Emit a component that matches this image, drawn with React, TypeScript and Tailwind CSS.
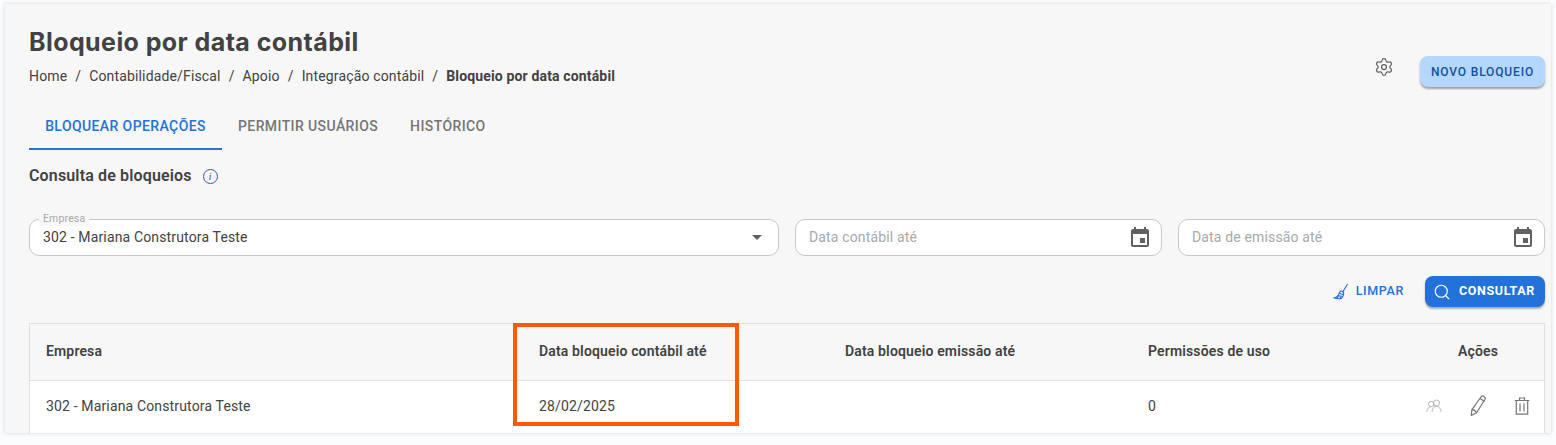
import React from "react";
import { Search, Settings } from "lucide-react";

const crumbs = ["Home", "Contabilidade/Fiscal", "Apoio", "Integração contábil"];

const CalendarIcon = () => (
  <svg width="24" height="24" viewBox="0 0 24 24" fill="#616161">
    <path d="M17 12h-5v5h5v-5zM16 1v2H8V1H6v2H5c-1.11 0-1.99.9-1.99 2L3 19c0 1.1.89 2 2 2h14c1.1 0 2-.9 2-2V5c0-1.1-.9-2-2-2h-1V1h-2zm3 18H5V8h14v11z" />
  </svg>
);

const BroomIcon = () => (
  <svg width="16" height="18" viewBox="0 0 16 18" fill="none" stroke="#1f6fd6" strokeWidth="1.1">
    <path d="M14.5 1 9.6 9.2" />
    <path d="M7.6 8.2c1-.6 2.6.2 3 1.4.3 1.3-.3 3.6-2 5.6-1.800.6-4.600.6-7.100-.3 1.600-.4 2.800-1.200 3.500-2.300.6-1.500 1.400-3.600 2.600-4.400z" />
    <path d="M4.500 12.500l5.400 1M6.200 10.200l4.400 1.600M4 15.200l1.800-2.600M7 15.600l1.200-2.300" />
  </svg>
);

const UsersIcon = () => (
  <svg width="16" height="14" viewBox="0 0 16 14" fill="none" stroke="#b5b5b5" strokeWidth="1">
    <circle cx="5.200" cy="5" r="2.700" />
    <circle cx="10.500" cy="4" r="3" />
    <path d="M.8 12.500c.3-2.600 1.700-4.300 3.500-4.500M6 12.800c.2-3.300 2-5.600 4.500-5.600s4.200 2.300 4.700 5.600" />
  </svg>
);

const PencilIcon = () => (
  <svg width="18" height="22" viewBox="0 0 18 22" fill="none" stroke="#757575" strokeWidth="1.200" strokeLinejoin="round">
    <path d="M12.300 1.500c.8-.8 2-.5 2.900.1.900.7 1.300 1.800.8 2.700L7.600 17.700 2.300 20.500l.6-5.900z" />
    <path d="M3 14.600c1.300-.1 3.500 1.200 4.600 3.100M11 3.600l4.700 3" />
  </svg>
);

const TrashIcon = () => (
  <svg width="16" height="18" viewBox="0 0 16 18" fill="none" stroke="#757575" strokeWidth="1.200">
    <path d="M.8 3.500h14.400M2.300 3.500v13.700h11.400V3.500M5.500 3.300V1h5v2.300M6 6.500v8M10 6.500v8" />
  </svg>
);

const Field = ({ label, width }: { label: string; width: string }) => (
  <div className={`flex h-[37px] items-center justify-between rounded-[10px] border border-[#c8c8c8] bg-white pl-[13px] pr-[9px] ${width}`}>
    <span className="text-[14px] text-[#a9a9a9]">{label}</span>
    <CalendarIcon />
  </div>
);

export default function App() {
  return (
    <div className="h-[445px] w-full overflow-hidden bg-[#fbfcfe] pl-[5px] pr-[5px] pt-[4px] font-['Roboto',sans-serif] tracking-[0.15px] text-[#424242]">
      <div className="h-[429px] overflow-hidden bg-[#f7f7f7] pl-[24px] pr-[6px] pt-[21px] shadow-[0_0_4px_rgba(0,0,0,0.16)]">
        <div className="flex items-start justify-between">
          <div>
            <h1 className="font-['Inter',sans-serif] text-[25px] font-bold leading-[34px] tracking-[0.42px] text-[#424242]">
              Bloqueio por data contábil
            </h1>
            <nav className="mt-[7px] flex items-center text-[14px] leading-[20px]">
              {crumbs.map((crumb) => (
                <React.Fragment key={crumb}>
                  <span>{crumb}</span>
                  <span className="mx-[8px]">/</span>
                </React.Fragment>
              ))}
              <span className="font-bold">Bloqueio por data contábil</span>
            </nav>
          </div>
          <div className="mt-[31px] flex items-center gap-[26px]">
            <Settings size={20} strokeWidth={1.5} className="mb-[9px] text-[#616161]" />
            <button className="flex h-[31px] w-[125px] items-center justify-center rounded-[8px] bg-[#b3d7ff] text-[12px] font-medium tracking-[0.85px] text-[#14529e] shadow-[0_2px_2px_rgba(0,0,0,0.35)]">
              NOVO BLOQUEIO
            </button>
          </div>
        </div>

        <div className="mt-[16px] flex text-[14px] font-medium tracking-[0.4px] text-[#757575]">
          <div className="flex h-[47px] w-[193px] items-center justify-center border-b-2 border-[#2272d9] pt-[1px] text-[#2272d9]">
            BLOQUEAR OPERAÇÕES
          </div>
          <div className="flex h-[47px] items-center px-[16px]">PERMITIR USUÁRIOS</div>
          <div className="flex h-[47px] items-center px-[16px]">HISTÓRICO</div>
        </div>

        <div className="mt-[15px] flex h-[22px] items-center">
          <h2 className="text-[16px] font-semibold leading-[22px]">Consulta de bloqueios</h2>
          <span className="ml-[11px] flex h-[15px] w-[15px] items-center justify-center rounded-full border border-[#3f51b5] font-['Liberation_Serif',serif] text-[11px] italic leading-none text-[#3f51b5]">
            i
          </span>
        </div>

        <div className="mt-[32px] flex gap-[16px]">
          <div className="relative flex h-[37px] w-[750px] items-center justify-between rounded-[10px] border border-[#c8c8c8] bg-white pl-[13px] pr-[16px]">
            <span className="absolute -top-[8px] left-[9px] bg-[#f7f7f7] px-[4px] text-[10.5px] leading-[14px] text-[#a9a9a9]">
              Empresa
            </span>
            <span className="text-[14px]">302 - Mariana Construtora Teste</span>
            <span className="h-0 w-0 border-x-[5.5px] border-t-[5px] border-x-transparent border-t-[#616161]" />
          </div>
          <Field label="Data contábil até" width="w-[367px]" />
          <Field label="Data de emissão até" width="w-[367px]" />
        </div>

        <div className="mt-[20px] flex items-center justify-end">
          <button className="mr-[21px] flex items-center gap-[7px] text-[12.5px] font-medium tracking-[0.65px] text-[#2272d9]">
            <BroomIcon />
            LIMPAR
          </button>
          <button className="flex h-[31px] w-[120px] items-center justify-center gap-[8px] rounded-[8px] bg-[#2272d9] pr-[2px] text-[12.5px] font-bold tracking-[0.6px] text-white shadow-[0_2px_2px_rgba(0,0,0,0.3)]">
            <Search size={18} strokeWidth={1.5} />
            CONSULTAR
          </button>
        </div>

        <div className="relative mt-[16px] border border-[#e0e0e0] border-b-0">
          <div className="grid h-[57px] grid-cols-[493px_306px_303px_1fr] items-center border-b border-[#e0e0e0] pb-[1px] text-[14px] font-semibold">
            <div className="pl-[16px]">Empresa</div>
            <div className="pl-[16px]">Data bloqueio contábil até</div>
            <div className="pl-[16px]">Data bloqueio emissão até</div>
            <div className="flex justify-between pl-[16px] pr-[46px]">
              <span>Permissões de uso</span>
              <span>Ações</span>
            </div>
          </div>
          <div className="grid h-[70px] grid-cols-[493px_306px_303px_1fr] items-center bg-white pb-[20px] text-[14px]">
            <div className="pl-[16px]">302 - Mariana Construtora Teste</div>
            <div className="pl-[16px]">28/02/2025</div>
            <div />
            <div className="flex items-center justify-between pl-[16px] pr-[14px]">
              <span>0</span>
              <div className="flex items-center gap-[27px]">
                <UsersIcon />
                <PencilIcon />
                <TrashIcon />
              </div>
            </div>
          </div>
          <div className="absolute -top-[1px] left-[483px] h-[103px] w-[226px] border-[4px] border-[#ff5a00]" />
        </div>
      </div>
    </div>
  );
}
